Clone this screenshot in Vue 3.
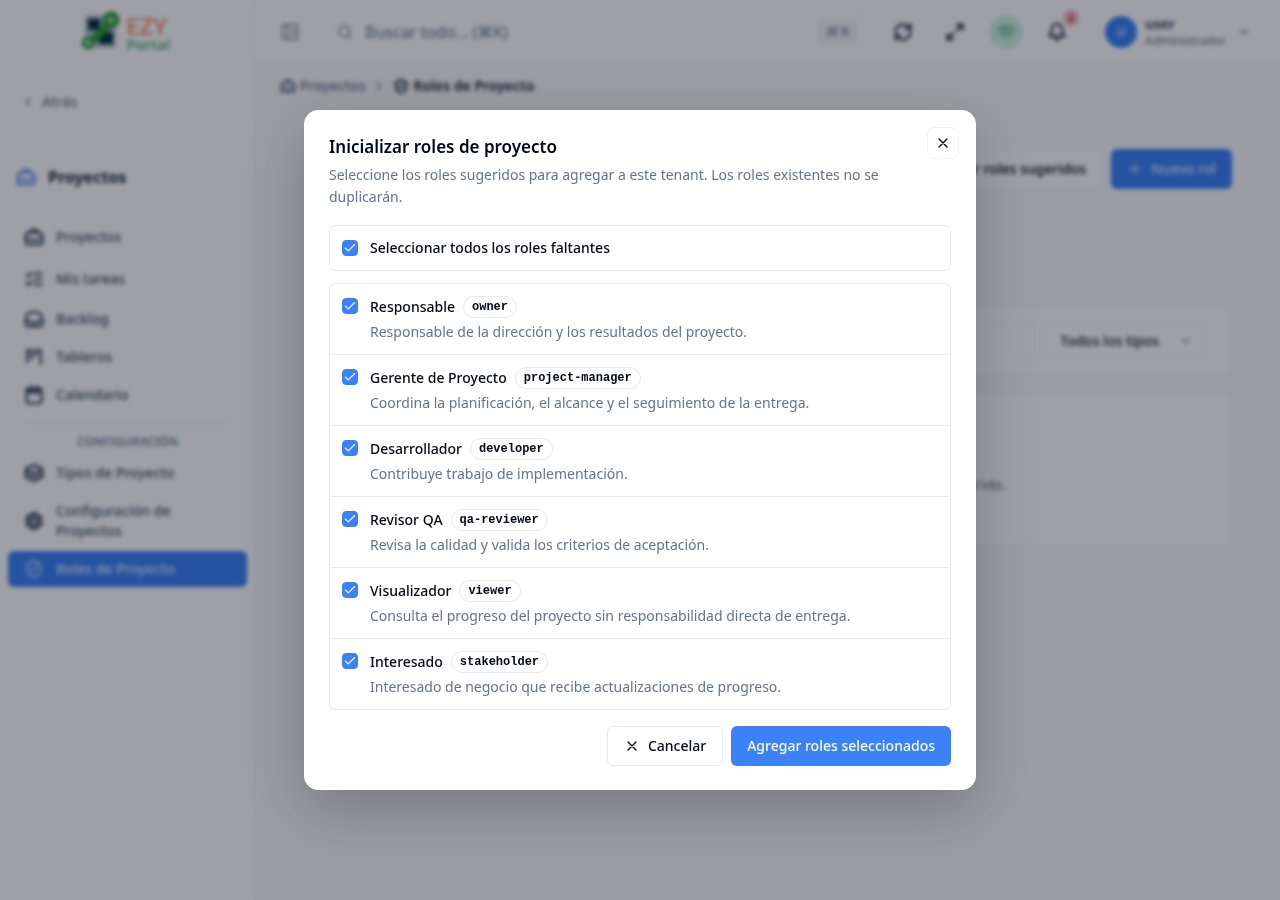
<script setup>
import { ref, computed, h } from 'vue'

const icons = {
  home: '<path d="M2 12c0-3 2-5 5-5h10c3 0 5 2 5 5v6a3 3 0 0 1-3 3H5a3 3 0 0 1-3-3z"/><path d="M7 7c1-3 2.500-4 5-4s4 1 5 4M2 13c6 4 14 4 20 0"/>',
  tasks: '<path d="m3 7 2 2 4-4M3 17l2 2 4-4M13 5h8M13 12h8M13 19h8"/>',
  inbox: '<path d="M2 14h5l2 3h6l2-3h5"/><path d="M7 4h10c3 1 5 5 5 9v5a3 3 0 0 1-3 3H5a3 3 0 0 1-3-3v-5c0-4 2-8 5-9z"/>',
  board: '<path d="M4 4v14M4 4h5v10M14 4h6v16M14 4v6"/>',
  calendar: '<rect x="3" y="4" width="18" height="18" rx="3"/><path d="M8 2v4M16 2v4M3 9h18M4 7h16"/>',
  layers: '<path d="m12 2 10 5-10 5L2 7zM2 12l10 5 10-5M2 17l10 5 10-5M2 7v10M22 7v10"/>',
  settings: '<path d="m12 2 8.5 5v10L12 22l-8.500-5V7z"/><circle cx="12" cy="12" r="4"/><path d="M12 2v6M12 16v6M3.500 7l5 3M15.500 14l5 3M20.500 7l-5 3M8.500 14l-5 3"/>',
  shield: '<path d="M20 13c0 5-3.500 7.500-8 9-4.500-1.500-8-4-8-9V6c3 0 5.500-1.500 8-4 2.500 2.500 5 4 8 4z"/><path d="m9 12 2 2 4-4"/>',
  back: '<path d="m15 18-6-6 6-6"/>',
  next: '<path d="m9 18 6-6-6-6"/>',
  down: '<path d="m6 9 6 6 6-6"/>',
  panel: '<rect x="3" y="3" width="18" height="18" rx="2"/><path d="M9 3v18M14 8h3M14 12h3M14 16h3"/>',
  search: '<circle cx="11" cy="11" r="8"/><path d="m21 21-4.300-4.300"/>',
  refresh: '<path d="M3 12a9 9 0 0 1 15-6.700L21 8M21 3v5h-5M21 12a9 9 0 0 1-15 6.700L3 16M3 21v-5h5"/>',
  expand: '<path d="M15 3h6v6M9 21H3v-6M21 3l-7 7M3 21l7-7"/>',
  wifi: '<path d="M12 20h.01M2 8.800a15 15 0 0 1 20 0M5 12.900a10 10 0 0 1 14 0M8.500 16.400a5 5 0 0 1 7 0"/>',
  bell: '<path d="M6 8a6 6 0 0 1 12 0c0 7 3 7 3 9H3c0-2 3-2 3-9M10 21h4"/>',
  plus: '<path d="M5 12h14M12 5v14"/>',
  close: '<path d="M18 6 6 18M6 6l12 12"/>',
  check: '<path d="M20 6 9 17l-5-5"/>'
}

const Icon = (props) =>
  h('svg', {
    viewBox: '0 0 24 24',
    width: props.size || 20,
    height: props.size || 20,
    fill: 'none',
    stroke: 'currentColor',
    'stroke-width': props.weight || 2,
    'stroke-linecap': 'round',
    'stroke-linejoin': 'round',
    'aria-hidden': 'true',
    innerHTML: icons[props.name]
  })
Icon.props = ['name', 'size', 'weight']

const mainNav = [
  { label: 'Proyectos', icon: 'home', space: 'wide' },
  { label: 'Mis tareas', icon: 'tasks', space: 'medium' },
  { label: 'Backlog', icon: 'inbox' },
  { label: 'Tableros', icon: 'board' },
  { label: 'Calendario', icon: 'calendar' }
]
const configNav = [
  { label: 'Tipos de Proyecto', icon: 'layers' },
  { label: 'Configuración de Proyectos', icon: 'settings' },
  { label: 'Roles de Proyecto', icon: 'shield', active: true }
]

const roles = ref([
  { key: 'owner', name: 'Responsable', text: 'Responsable de la dirección y los resultados del proyecto.', on: true },
  { key: 'project-manager', name: 'Gerente de Proyecto', text: 'Coordina la planificación, el alcance y el seguimiento de la entrega.', on: true },
  { key: 'developer', name: 'Desarrollador', text: 'Contribuye trabajo de implementación.', on: true },
  { key: 'qa-reviewer', name: 'Revisor QA', text: 'Revisa la calidad y valida los criterios de aceptación.', on: true },
  { key: 'viewer', name: 'Visualizador', text: 'Consulta el progreso del proyecto sin responsabilidad directa de entrega.', on: true },
  { key: 'stakeholder', name: 'Interesado', text: 'Interesado de negocio que recibe actualizaciones de progreso.', on: true }
])
const all = computed({
  get: () => roles.value.every((r) => r.on),
  set: (v) => roles.value.forEach((r) => (r.on = v))
})
</script>

<template>
  <div class="shell">
    <aside class="sidebar">
      <div class="logo">
        <svg width="40" height="42" viewBox="0 0 40 42" aria-hidden="true">
          <rect x="4" y="4" width="31" height="33" rx="2" fill="#b8c4d4" />
          <rect x="7" y="8" width="12" height="11" fill="#05323f" />
          <rect x="18" y="21" width="14" height="12" fill="#05323f" />
          <path d="M12 29 27 14" stroke="#2b9e3a" stroke-width="8" />
          <circle cx="30" cy="9" r="6" fill="#a5d6ac" stroke="#2b9e3a" stroke-width="5" />
          <circle cx="7" cy="32" r="5" fill="#a5d6ac" stroke="#2b9e3a" stroke-width="3" />
        </svg>
        <span class="wordmark"><b>EZY</b><span>Portal</span></span>
      </div>
      <a class="back" href="#"><Icon name="back" :size="14" />Atrás</a>
      <h2 class="section"><Icon name="home" :size="20" :weight="3" />Proyectos</h2>
      <nav class="nav">
        <a v-for="n in mainNav" :key="n.label" href="#" class="nav-item" :class="n.space">
          <Icon :name="n.icon" :weight="3" />{{ n.label }}
        </a>
        <p class="group">CONFIGURACIÓN</p>
        <a v-for="n in configNav" :key="n.label" href="#" class="nav-item" :class="{ active: n.active }">
          <Icon :name="n.icon" :weight="n.active ? 2 : 3" />{{ n.label }}
        </a>
      </nav>
    </aside>

    <div class="content">
      <header class="topbar">
        <button class="plain muted" aria-label="Panel"><Icon name="panel" /></button>
        <div class="search">
          <Icon name="search" :size="16" />
          <input type="text" aria-label="Buscar" placeholder="Buscar todo... (⌘K)" />
          <kbd>⌘ K</kbd>
        </div>
        <div class="actions">
          <button class="plain" aria-label="Actualizar"><Icon name="refresh" :weight="3" /></button>
          <button class="plain" aria-label="Pantalla completa"><Icon name="expand" :weight="3" /></button>
          <span class="online"><Icon name="wifi" :weight="3" /></span>
          <button class="plain bell" aria-label="Notificaciones"><Icon name="bell" :weight="3" /><span class="count">2</span></button>
        </div>
        <button class="user">
          <span class="avatar">U</span>
          <span class="who"><b>user</b><small>Administrador</small></span>
          <Icon name="down" :size="14" />
        </button>
      </header>

      <nav class="crumbs">
        <a href="#"><Icon name="home" :size="16" :weight="3" />Proyectos</a>
        <Icon name="next" :size="14" />
        <strong><Icon name="shield" :size="16" :weight="3" />Roles de Proyecto</strong>
      </nav>

      <main class="page">
        <div class="page-head">
          <button class="btn outline">Inicializar roles sugeridos</button>
          <button class="btn primary"><Icon name="plus" :size="16" />Nuevo rol</button>
        </div>
        <section class="filters">
          <input type="text" aria-label="Filtrar roles" />
          <div class="select">
            <select aria-label="Tipo"><option>Todos los tipos</option></select>
            <Icon name="down" :size="14" />
          </div>
        </section>
        <section class="empty">No hay roles configurados. Cree un nuevo rol o inicialice un rol sugerido.</section>
      </main>
    </div>
  </div>

  <div class="overlay">
    <section class="dialog" role="dialog" aria-modal="true" aria-labelledby="dialog-title">
      <button class="close" aria-label="Cerrar"><Icon name="close" :size="16" /></button>
      <h1 id="dialog-title">Inicializar roles de proyecto</h1>
      <p class="lead">Seleccione los roles sugeridos para agregar a este tenant. Los roles existentes no se duplicarán.</p>

      <label class="select-all" for="all-roles">
        <span class="check"><input id="all-roles" v-model="all" type="checkbox" /><Icon name="check" :size="14" /></span>
        <span class="name">Seleccionar todos los roles faltantes</span>
      </label>

      <div class="roles">
        <label v-for="r in roles" :key="r.key" class="role" :for="'role-' + r.key">
          <span class="check"><input :id="'role-' + r.key" v-model="r.on" type="checkbox" /><Icon name="check" :size="14" /></span>
          <span class="info">
            <span class="line"><span class="name">{{ r.name }}</span><code>{{ r.key }}</code></span>
            <span class="text">{{ r.text }}</span>
          </span>
        </label>
      </div>

      <footer class="footer">
        <button class="btn outline"><Icon name="close" :size="16" />Cancelar</button>
        <button class="btn primary">Agregar roles seleccionados</button>
      </footer>
    </section>
  </div>
</template>

<style>
body {
  margin: 0;
  font-family: "Noto Sans", "DejaVu Sans", sans-serif;
  font-size: 14px;
  line-height: 20px;
  color: #020817;
}
</style>

<style scoped>
*, :deep(svg) { box-sizing: border-box; flex-shrink: 0; }
button, input, select { font: inherit; color: inherit; margin: 0; }
button { cursor: pointer; }
a { color: inherit; text-decoration: none; }
h1, h2, p { margin: 0; }

.shell { display: flex; min-height: 100vh; background: #f8fafa; }
.sidebar { width: 256px; background: #fff; border-right: 1px solid #eef2f4; }
.logo { display: flex; justify-content: center; align-items: center; gap: 5px; height: 64px; padding-right: 4px; }
.wordmark { display: flex; flex-direction: column; padding-top: 4px; font-size: 15px; line-height: 17px; color: #4fae68; font-family: "Open Sans", sans-serif; font-weight: 600; }
.wordmark b { font-size: 24px; line-height: 21px; font-weight: 600; color: #f2906c; }
.back { display: flex; align-items: center; gap: 7px; padding: 28px 21px 0; color: #64748b; font-weight: 500; }
.section { display: flex; align-items: center; gap: 12px; padding: 52px 16px 0; font-size: 16px; line-height: 26px; font-weight: 700; color: #1e293b; }
.section svg { color: #6d93f5; }
.nav { display: flex; flex-direction: column; gap: 2px; padding: 29px 8px 0; font-weight: 500; color: #475569; }
.nav-item { display: flex; align-items: center; gap: 12px; padding: 8px 60px 8px 16px; border-radius: 6px; }
.nav-item.wide { margin-bottom: 4px; }
.nav-item.medium { margin-bottom: 2px; }
.nav-item.active { background: #3b82f6; color: #dbe8ff; padding-right: 16px; }
.group { margin: 7px 16px 1px; padding-top: 9px; border-top: 1px solid #e2e8f0; text-align: center; font-size: 12px; font-weight: 600; line-height: 20px; color: #74849b; }

.content { flex: 1; min-width: 0; }
.topbar { display: flex; align-items: center; height: 64px; padding: 0 24px; background: #fff; border-bottom: 1px solid #eef2f4; color: #334155; }
.plain { display: flex; padding: 0; border: 0; background: none; }
.muted { color: #7c8a9e; }
.search { display: flex; flex: 1; align-items: center; gap: 12px; margin-left: 24px; padding: 0 8px 0 12px; height: 40px; color: #64748b; border: 1px solid #fafbfc; border-radius: 8px; }
.search input { flex: 1; min-width: 0; border: 0; padding: 0; background: none; font-size: 16px; outline: 0; }
.search input::placeholder { color: #64748b; opacity: 1; }
kbd { padding: 2px 8px; background: #eef2f4; border-radius: 4px; font: 500 12px/18px "Noto Sans", "DejaVu Sans", sans-serif; }
.actions { display: flex; align-items: center; gap: 32px; margin-left: 27px; }
.online { display: flex; align-items: center; justify-content: center; width: 34px; height: 34px; margin: 0 -8px; border-radius: 50%; background: #cdf5dd; color: #5cc798; }
.bell { position: relative; }
.count { position: absolute; top: -12px; left: 16px; width: 16px; height: 16px; border-radius: 50%; background: #f5bcc4; color: #dc2638; font-size: 10px; line-height: 16px; font-weight: 700; }
.user { display: flex; align-items: center; gap: 8px; margin-left: 38px; padding: 0 5px 0 0; border: 0; background: none; text-align: left; }
.user svg { color: #64748b; }
.avatar { width: 32px; height: 32px; border-radius: 50%; background: #3b82f6; color: #fff; text-align: center; font-size: 12px; line-height: 32px; }
.who { display: flex; flex-direction: column; padding-right: 3px; }
.who b { font-weight: 600; line-height: 17px; }
.who small { font-size: 12px; line-height: 17px; color: #64748b; }

.crumbs { display: flex; align-items: center; gap: 7px; height: 44px; padding: 0 24px; border-bottom: 1px solid #f4f6f7; color: #64748b; font-weight: 500; }
.crumbs a, .crumbs strong { display: flex; align-items: center; gap: 4px; font-weight: 500; }
.crumbs strong { color: #1e293b; font-weight: 600; }

.page { padding: 41px 48px 24px; }
.page-head { display: flex; justify-content: flex-end; gap: 8px; height: 157px; align-items: flex-start; }
.btn { display: flex; align-items: center; gap: 8px; height: 40px; padding: 0 16px; border: 1px solid #e6e9ed; border-radius: 6px; background: #fff; font-weight: 500; white-space: nowrap; }
.btn.primary { background: #3b82f6; border: 0; color: #f8fafc; }
.page-head .outline { border-color: #f4f6f7; }
.page-head .primary { color: #dbe8ff; }
.filters { display: flex; gap: 8px; padding: 15px 24px; background: #fff; border: 1px solid #f1f4f6; border-radius: 8px; }
.filters input { flex: 1; height: 38px; border: 1px solid #f4f6f7; border-radius: 6px; background: #fff; }
.select { display: grid; width: 162px; align-items: center; }
.select select { grid-area: 1 / 1; height: 38px; padding: 0 14px; appearance: none; border: 1px solid #f4f6f7; border-radius: 6px; background: #fff; font-weight: 500; color: #1e293b; }
.select svg { grid-area: 1 / 1; justify-self: end; margin-right: 14px; color: #64748b; }
.empty { margin-top: 16px; padding: 82px 16px 50px; border: 1px solid #f1f4f6; border-radius: 8px; background: #fff; text-align: center; color: #64748b; }

.overlay { position: fixed; inset: 0; display: flex; align-items: center; justify-content: center; background: rgba(2, 6, 23, 0.38); backdrop-filter: blur(2px); }
.dialog { position: relative; width: 100%; max-width: 672px; padding: 24px 24px 23px; border: 1px solid #fff; border-radius: 14px; background: #fff; box-shadow: 0 20px 60px rgba(0, 0, 0, 0.22); }
.close { position: absolute; top: 16px; right: 16px; display: flex; align-items: center; justify-content: center; width: 32px; height: 32px; padding: 0; border: 1px solid #eef2f4; border-radius: 8px; background: #fff; }
.dialog h1 { font-size: 17px; line-height: 23px; font-weight: 600; }
.lead { margin: 6px 0 17px; padding-right: 32px; line-height: 22px; color: #64748b; }
.select-all { display: flex; align-items: center; gap: 12px; height: 46px; padding: 0 12px; border: 1px solid #e6e9ed; border-radius: 6px; }
.check { display: grid; place-items: center; width: 16px; height: 16px; }
.check input { grid-area: 1 / 1; width: 16px; height: 16px; appearance: none; border: 1px solid #3b82f6; border-radius: 4px; background: #fff; }
.check input:checked { background: #3b82f6; }
.check svg { grid-area: 1 / 1; color: #f8fafc; pointer-events: none; }
.check input:not(:checked) + svg { visibility: hidden; }
.name { font-weight: 500; }
.roles { margin: 12px 0 16px; border: 1px solid #e6e9ed; border-radius: 6px; }
.role { display: flex; gap: 12px; padding: 12px; }
.role + .role { border-top: 1px solid #e6e9ed; }
.role .check { margin-top: 2px; }
.info { display: flex; flex: 1; flex-direction: column; gap: 4px; }
.line { display: flex; align-items: center; gap: 8px; }
code { padding: 1px 8px; border: 1px solid #e6e9ed; border-radius: 11px; font: 600 12px/18px "Liberation Mono", monospace; }
.text { color: #64748b; }
.footer { display: flex; justify-content: flex-end; gap: 8px; }
</style>
